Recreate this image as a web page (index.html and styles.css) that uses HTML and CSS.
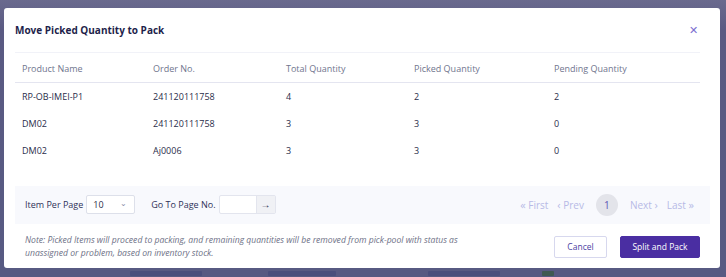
FILE: index.html
```html
<!DOCTYPE html>
<html lang="en">
<head>
  <meta charset="UTF-8">
  <title>Move Picked Quantity to Pack</title>
  <link rel="stylesheet" href="styles.css">
</head>
<body>
  <div class="backdrop">
    <div class="behind">
      <span class="b1"></span>
      <span class="b2"></span>
      <span class="b3"></span>
      <span class="b4"></span>
    </div>

    <div class="modal">
      <div class="modal-head">
        <h2>Move Picked Quantity to Pack</h2>
        <span class="close">&#x2715;</span>
      </div>

      <table class="grid">
        <thead>
          <tr>
            <th class="c1">Product Name</th>
            <th class="c2">Order No.</th>
            <th class="c3">Total Quantity</th>
            <th class="c4">Picked Quantity</th>
            <th>Pending Quantity</th>
          </tr>
        </thead>
        <tbody>
          <tr><td>RP-OB-IMEI-P1</td><td>241120111758</td><td>4</td><td>2</td><td>2</td></tr>
          <tr><td>DM02</td><td>241120111758</td><td>3</td><td>3</td><td>0</td></tr>
          <tr><td>DM02</td><td>Aj0006</td><td>3</td><td>3</td><td>0</td></tr>
        </tbody>
      </table>

      <div class="pager">
        <div class="pager-left">
          <span class="lbl">Item Per Page</span>
          <div class="select">10 <span class="caret">&#x2304;</span></div>
          <span class="lbl goto">Go To Page No.</span>
          <div class="goto-box">
            <span class="goto-input"></span>
            <span class="goto-btn">&#x2192;</span>
          </div>
        </div>
        <div class="pager-right">
          <span class="pg"><b>&laquo;</b> First</span>
          <span class="pg"><b>&lsaquo;</b> Prev</span>
          <span class="pg-num">1</span>
          <span class="pg">Next <b>&rsaquo;</b></span>
          <span class="pg">Last <b>&raquo;</b></span>
        </div>
      </div>

      <div class="modal-foot">
        <p class="note">Note: Picked Items will proceed to packing, and remaining quantities will be removed from pick-pool with status as unassigned or problem, based on inventory stock.</p>
        <div class="actions">
          <button class="btn-cancel">Cancel</button>
          <button class="btn-primary">Split and Pack</button>
        </div>
      </div>
    </div>
  </div>
</body>
</html>
```

FILE: styles.css
```css
* {
  box-sizing: border-box;
}

body {
  margin: 0;
  font-family: 'Open Sans', 'Noto Sans', sans-serif;
  background: #5a5a82;
  overflow: hidden;
}

.backdrop {
  position: relative;
  width: 726px;
  height: 277px;
  padding: 8px 6px 0 4px;
  background: linear-gradient(#6a6a8e, #5a5a82 30px, #575a82);
}

/* blurred page rows showing under the overlay */
.behind {
  position: absolute;
  left: 0;
  bottom: 0;
  width: 100%;
  height: 9px;
}

.behind span {
  position: absolute;
  top: 3px;
  height: 5px;
  background: #4a4f7c;
  border-radius: 1px;
}

.b1 { left: 130px; width: 72px; }
.b2 { left: 268px; width: 68px; }
.b3 { left: 428px; width: 72px; }
.b4 { left: 542px; width: 12px; background: #3f5a52 !important; }

.modal {
  width: 716px;
  height: 260px;
  background: #fff;
  border-radius: 3px;
  padding: 0 11px 0 11px;
  display: flex;
  flex-direction: column;
}

.modal-head {
  display: flex;
  justify-content: space-between;
  align-items: center;
  height: 44px;
  padding: 0 11px 1px 0;
}

.modal-head h2 {
  margin: 0;
  font-size: 10px;
  font-weight: 700;
  color: #1e1f4b;
}

.close {
  font-size: 11px;
  color: #7b6fd0;
}

.grid {
  width: 685px;
  border-collapse: collapse;
  font-size: 9px;
  color: #2a2d4a;
  border-top: 1px solid #f1f2f8;
}

.grid th {
  text-align: left;
  font-weight: 400;
  color: #70758e;
  height: 30px;
  padding: 1px 0 0 7px;
  border-bottom: 1px solid #e4e5f0;
}

.grid td {
  height: 27px;
  padding: 0 0 0 7px;
}

.c1 { width: 131px; }
.c2 { width: 133px; }
.c3 { width: 128px; }
.c4 { width: 140px; }

.pager {
  margin-top: 22px;
  width: 695px;
  height: 38px;
  background: #f8f9fd;
  display: flex;
  justify-content: space-between;
  align-items: center;
  padding: 0 10px;
  font-size: 9px;
}

.pager-left {
  display: flex;
  align-items: center;
}

.lbl {
  color: #2e3158;
}

.select {
  width: 49px;
  height: 19px;
  margin-left: 3px;
  background: #fff;
  border: 1px solid #dde0ea;
  border-radius: 2px;
  display: flex;
  align-items: center;
  justify-content: space-between;
  padding: 0 7px 0 6px;
  color: #2a2d4a;
}

.caret {
  font-size: 8px;
  color: #8a8ea6;
  margin-top: -5px;
}

.goto {
  margin-left: 16px;
}

.goto-box {
  display: flex;
  margin-left: 3px;
  height: 19px;
  border: 1px solid #e3e5ee;
  border-radius: 2px;
  background: #fff;
}

.goto-input {
  width: 36px;
}

.goto-btn {
  width: 19px;
  background: #f0f1f5;
  border-left: 1px solid #e3e5ee;
  text-align: center;
  line-height: 17px;
  font-size: 10px;
  font-weight: 700;
  color: #2a2d4a;
}

.pager-right {
  display: flex;
  align-items: center;
  gap: 9px;
  color: #b7b9e6;
  font-size: 10px;
  padding-right: 6px;
}

.pg b {
  font-size: 11px;
  font-weight: 400;
}

.pg-num {
  width: 22px;
  height: 22px;
  border-radius: 50%;
  background: #e3e4ea;
  color: #5d56b5;
  text-align: center;
  line-height: 22px;
  margin: 0 3px;
}

.modal-foot {
  flex: 1;
  display: flex;
  justify-content: space-between;
  align-items: center;
  padding: 2px 9px 0 10px;
}

.note {
  margin: 0;
  width: 452px;
  font-size: 8.6px;
  font-style: italic;
  color: #6e7186;
  line-height: 13px;
}

.actions {
  display: flex;
  gap: 13px;
}

button {
  font-family: inherit;
  font-size: 8.5px;
  height: 22px;
  border-radius: 2px;
  cursor: pointer;
}

.btn-cancel {
  width: 53px;
  background: #fff;
  border: 1px solid #d7d8ee;
  color: #4b3fa3;
}

.btn-primary {
  width: 80px;
  background: #4a2ea2;
  border: 1px solid #4a2ea2;
  color: #fff;
}
```
